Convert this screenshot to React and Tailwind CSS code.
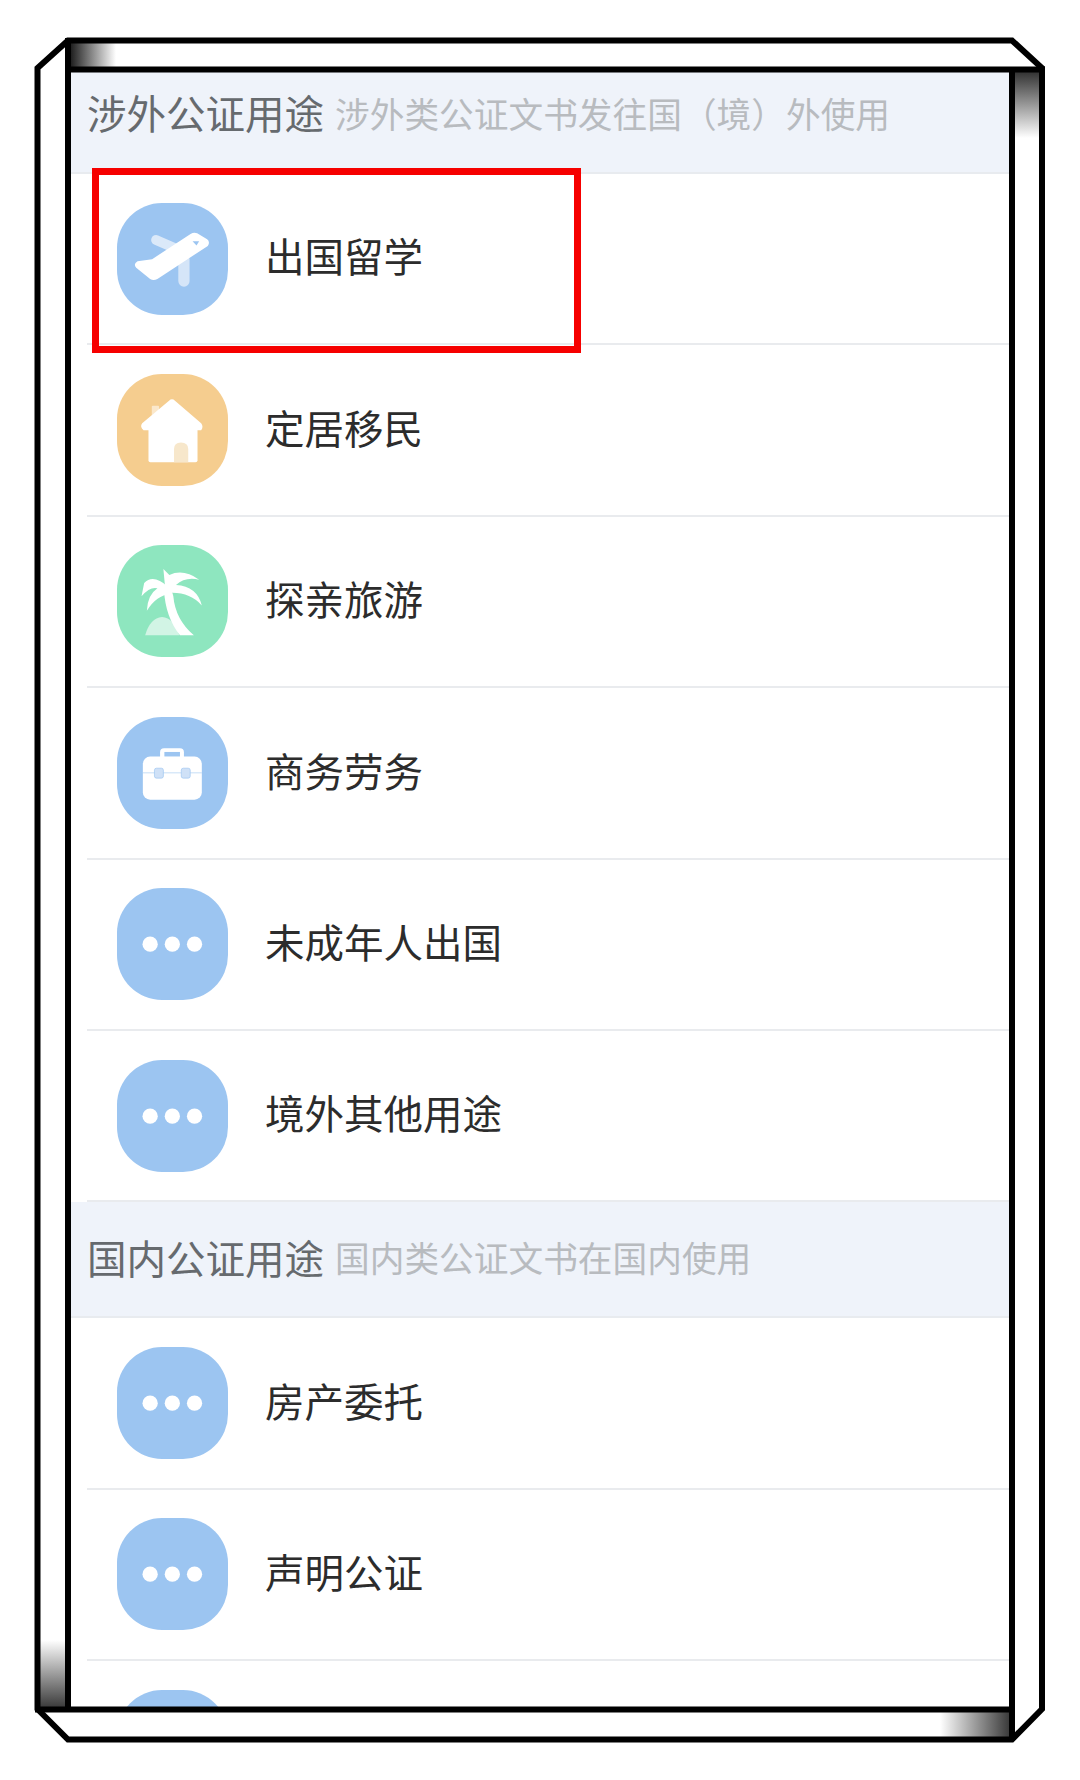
const BLUE = 'bg-[#9cc5f1]'

function PlaneIcon() {
  return (
    <svg viewBox="50 40 335 335" className="h-full w-full">
      <path d="M168 150 L232 178" stroke="#dbe9f9" strokeWidth="30" strokeLinecap="round" fill="none" />
      <path d="M252 210 L252 274" stroke="#d5e5f8" strokeWidth="34" strokeLinecap="round" fill="none" />
      <path
        d="M112 214 L156 208 L272 132 Q282 126 292 130 L322 148 Q332 156 324 168 L172 268 Q160 274 150 268 L108 234 Q98 222 112 214 Z"
        fill="#fff"
      />
      <path d="M278 154 L298 154 L290 167 Z" fill="#9cc5f1" />
    </svg>
  )
}

function HouseIcon() {
  return (
    <svg viewBox="50 43 335 335" className="h-full w-full">
      <rect x="155" y="137" width="22" height="36" rx="3" fill="#fbe8cb" />
      <path
        d="M207 122 Q216 114 225 122 L304 190 Q312 200 304 211 L130 211 Q118 200 126 190 Z"
        fill="#fff"
      />
      <path d="M145 205 L293 205 L293 302 Q293 308 287 308 L151 308 Q145 308 145 302 Z" fill="#fff" />
      <path d="M222 308 L222 268 Q222 248 243 248 Q265 248 265 268 L265 308 Z" fill="#f7e7cb" />
    </svg>
  )
}

function PalmIcon() {
  return (
    <svg viewBox="50 47 335 335" className="h-full w-full">
      <path d="M135 318 Q150 266 186 263 Q222 266 238 318 Z" fill="#d2f4e5" />
      <path d="M192 182 Q216 176 220 200 Q226 270 282 318 L240 318 Q196 262 192 182 Z" fill="#fff" />
      <path d="M196 182 L190 118 L208 136 Q250 116 298 150 Q256 140 228 166 Q292 170 306 228 Q270 188 212 190 Z" fill="#fff" />
      <path d="M204 172 Q160 132 132 160 L124 200 Q150 170 172 176 Q142 196 140 244 Q170 196 210 194 Z" fill="#fff" />
    </svg>
  )
}

function CaseIcon() {
  return (
    <svg viewBox="50 50 335 335" className="h-full w-full">
      <rect x="180" y="143" width="72" height="40" rx="12" fill="#fff" />
      <rect x="193" y="154" width="47" height="15" fill="#9cc5f1" />
      <rect x="128" y="168" width="178" height="130" rx="22" fill="#fff" />
      <path d="M128 217 L306 217" stroke="#a9cbf1" strokeWidth="2" />
      <rect x="163" y="203" width="27" height="30" rx="6" fill="#cfe1f7" stroke="#9cc5f1" strokeWidth="2" />
      <rect x="244" y="203" width="27" height="30" rx="6" fill="#cfe1f7" stroke="#9cc5f1" strokeWidth="2" />
    </svg>
  )
}

function DotsIcon() {
  return (
    <svg viewBox="50 50 335 335" className="h-full w-full">
      <circle cx="150" cy="218" r="23" fill="#fff" />
      <circle cx="217" cy="218" r="23" fill="#fff" />
      <circle cx="284" cy="218" r="23" fill="#fff" />
    </svg>
  )
}

function SectionHeader({ title, note, className = 'h-[117px]' }) {
  return (
    <div className={`flex shrink-0 items-center gap-[11px] border-b-2 border-[#e8ebef] bg-[#eff3fa] pb-[5px] pl-4 ${className}`}>
      <span className="text-[39.5px] leading-none text-[#666a6e]">{title}</span>
      <span className="mt-[2px] text-[34.7px] leading-none text-[#b8bbbf]">{note}</span>
    </div>
  )
}

function Row({ label, color = BLUE, icon }) {
  return (
    <div className="ml-4 flex h-[171.4px] shrink-0 items-center border-b-2 border-[#e9ebee] pl-[30px]">
      <div className={`h-[112px] w-[111px] shrink-0 rounded-[45px] ${color}`}>{icon}</div>
      <span className="mb-[7px] ml-[37px] text-[39.5px] leading-none text-[#2c2c2c]">{label}</span>
    </div>
  )
}

function Bezel() {
  const line = { stroke: '#000', strokeWidth: 6, fill: 'none' }
  return (
    <svg viewBox="0 0 1080 1780" className="pointer-events-none absolute inset-0 h-[1780px] w-[1080px]">
      <defs>
        <linearGradient id="tl" x1="0" x2="1" y1="0" y2="0">
          <stop offset="0" stopColor="#111" />
          <stop offset="1" stopColor="#fff" />
        </linearGradient>
        <linearGradient id="tr" x1="0" x2="0" y1="0" y2="1">
          <stop offset="0" stopColor="#333" />
          <stop offset="1" stopColor="#fff" />
        </linearGradient>
        <linearGradient id="bl" x1="0" x2="0" y1="1" y2="0">
          <stop offset="0" stopColor="#333" />
          <stop offset="1" stopColor="#fff" />
        </linearGradient>
        <linearGradient id="br" x1="1" x2="0" y1="0" y2="0">
          <stop offset="0" stopColor="#333" />
          <stop offset="1" stopColor="#fff" />
        </linearGradient>
      </defs>
      <rect x="68" y="43" width="48" height="26" fill="url(#tl)" />
      <rect x="1014" y="72" width="26" height="66" fill="url(#tr)" />
      <rect x="38" y="1640" width="28" height="70" fill="url(#bl)" />
      <rect x="940" y="1710" width="72" height="28" fill="url(#br)" />
      <path d="M68 40.5 L1012 40.5 L1042 68 L1042 1709 L1012 1739.5 L68 1739.5 L37.5 1709 L37.5 68 Z" {...line} />
      <path d="M68 38 L68 1709 M65 69.5 L1045 69.5 M1012 67 L1012 1741 M35 1709.5 L1015 1709.5" {...line} />
    </svg>
  )
}

export default function App() {
  return (
    <div
      className="relative h-[1780px] w-[1080px] overflow-hidden bg-white pt-[72px] pr-[71px] pl-[71px]"
      style={{ fontFamily: '"Noto Sans CJK SC", "Noto Sans", sans-serif' }}
    >
      <div className="h-[1636px] overflow-hidden bg-white">
        <div className="-mt-[15px] flex flex-col">
          <SectionHeader title="涉外公证用途" note="涉外类公证文书发往国（境）外使用" />
          <Row label="出国留学" icon={<PlaneIcon />} />
          <Row label="定居移民" color="bg-[#f5cd8f]" icon={<HouseIcon />} />
          <Row label="探亲旅游" color="bg-[#8ee6bf]" icon={<PalmIcon />} />
          <Row label="商务劳务" icon={<CaseIcon />} />
          <Row label="未成年人出国" icon={<DotsIcon />} />
          <Row label="境外其他用途" icon={<DotsIcon />} />
          <SectionHeader title="国内公证用途" note="国内类公证文书在国内使用" className="h-[116px]" />
          <Row label="房产委托" icon={<DotsIcon />} />
          <Row label="声明公证" icon={<DotsIcon />} />
          <Row label="" icon={<DotsIcon />} />
        </div>
      </div>
      <Bezel />
      <div className="absolute top-[168px] left-[92px] h-[185px] w-[489px] border-[7px] border-[#f60000]" />
    </div>
  )
}
